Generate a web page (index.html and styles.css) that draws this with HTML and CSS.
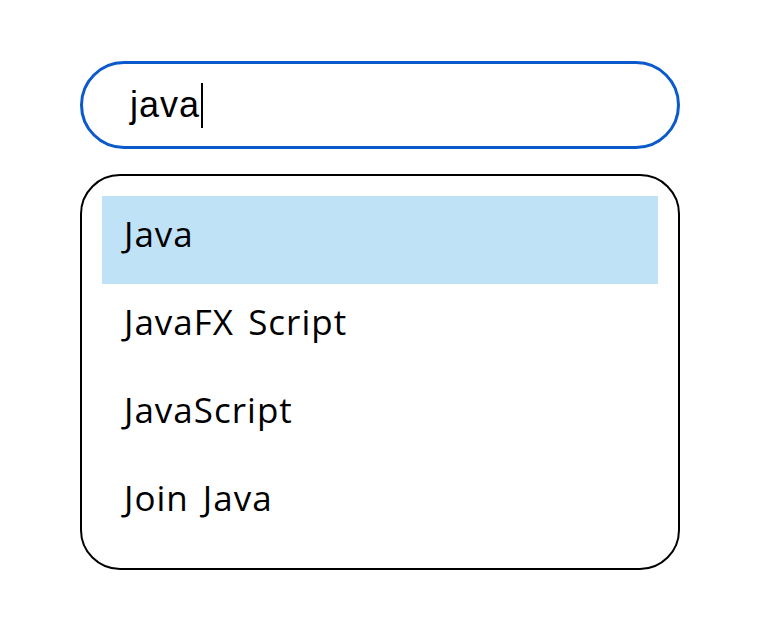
FILE: index.html
```html
<!DOCTYPE html>
<html>
<head>
<meta charset="utf-8">
<link rel="stylesheet" href="styles.css">
</head>
<body>
<div class="page">
  <div class="search">
    <span class="query">java</span><span class="caret"></span>
  </div>
  <ul class="list">
    <li class="item active">Java</li>
    <li class="item">JavaFX Script</li>
    <li class="item">JavaScript</li>
    <li class="item">Join Java</li>
  </ul>
</div>
</body>
</html>
```
FILE: styles.css
```css
html, body {
  margin: 0;
  padding: 0;
  background: #fff;
}
.page {
  padding: 61px 0 0 80px;
}
.search {
  box-sizing: border-box;
  width: 600px;
  height: 88px;
  border: 3px solid #0a5acb;
  border-radius: 44px;
  display: flex;
  align-items: center;
  padding-left: 47px;
  font-family: "Liberation Sans", Arial, sans-serif;
  font-size: 36px;
  line-height: 82px;
  letter-spacing: 1px;
  color: #000;
}
.caret {
  display: block;
  width: 2px;
  height: 45px;
  background: #000;
  margin-left: 1px;
}
.list {
  box-sizing: border-box;
  list-style: none;
  margin: 25px 0 0 0;
  width: 600px;
  height: 396px;
  border: 2px solid #000;
  border-radius: 40px;
  padding: 20px;
  font-family: "Open Sans", "Noto Sans", sans-serif;
  font-size: 35px;
  letter-spacing: 1px;
  word-spacing: 4px;
  color: #000;
}
.item {
  height: 88px;
  box-sizing: border-box;
  line-height: 76px;
  padding: 0 0 12px 22px;
  white-space: nowrap;
}
.item.active {
  background: #c0e2f7;
}
```
